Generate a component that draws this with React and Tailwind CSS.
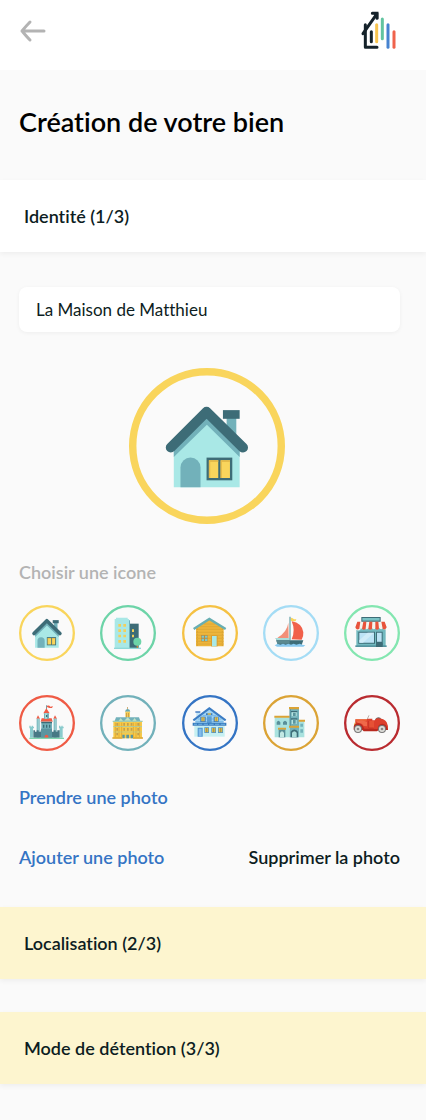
import React, { useState } from "react";

function BackArrow() {
  return (
    <svg viewBox="0 0 28 24" className="h-6 w-7" fill="none" stroke="#b3b3b3" strokeWidth="3" strokeLinecap="round" strokeLinejoin="round" aria-hidden="true">
      <path d="M25 12H3M11 3Q8 6 3 12Q8 18 11 21" />
    </svg>
  );
}

function Logo() {
  return (
    <svg viewBox="33 30 114 123" className="h-[41px] w-[38px]" fill="none" strokeLinecap="round" role="img" aria-label="Accueil">
      <g stroke="#15222a" strokeWidth="9">
        <path d="M49 74V142H84" strokeLinejoin="round" />
        <path d="M42 101L82 44" />
        <path d="M70 40L84 40L84 55" strokeLinejoin="miter" />
        <path d="M67 95V125" />
      </g>
      <path d="M71 39H88V58Z" fill="#15222a" />
      <g strokeWidth="9">
        <path d="M83 74V125" stroke="#f8c44f" />
        <path d="M100 57V116" stroke="#62c4a0" />
        <path d="M117 74V142" stroke="#4683d0" />
        <path d="M135 95V142" stroke="#f0634c" />
      </g>
    </svg>
  );
}

function Ring({ color, width = 7, children, className }) {
  return (
    <svg viewBox="0 0 168 168" className={className} aria-hidden="true">
      <circle cx="84" cy="84" r={84 - width / 2} fill="none" stroke={color} strokeWidth={width} />
      {children}
    </svg>
  );
}

function House() {
  return (
    <g transform="scale(0.36)">
      <path d="M292 145H321V230H292Z" fill="#72b1ba" />
      <path d="M281 126H331V152H281Z" fill="#3d6c77" />
      <path d="M134 234L233 138L331 234V357H134Z" fill="#a9e8e6" />
      <path d="M134 240V266L233 170L331 266V240L233 145Z" fill="#72b1ba" />
      <path d="M125 238L232 131L341 238" fill="none" stroke="#3d6c77" strokeWidth="30" strokeLinecap="round" strokeLinejoin="round" />
      <path d="M154 357V298A30 30 0 0 1 214 298V357Z" fill="#72b1ba" />
      <path d="M232 268H309V336H232Z" fill="#3d6c77" />
      <path d="M239 276H267V329H239ZM274 276H302V329H274Z" fill="#f9d55c" />
      <path d="M239 276H267V281H239ZM274 276H302V281H274ZM239 276H243V329H239ZM274 276H278V329H274Z" fill="#e6bb49" />
    </g>
  );
}

function Tower() {
  return (
    <g>
      <path d="M84 46H90V130H84Z" fill="#72b1ba" />
      <path d="M90 56H116V130H90Z" fill="#3d6c77" />
      <path d="M44 130V42H48V38H83V42H87V130Z" fill="#a9e8e6" />
      <path d="M42 128H123V132H42Z" fill="#8ed8d8" />
      <g fill="#f3cf5b">
        <path d="M55 57h8v8h-8zM70 57h8v8h-8zM55 73h8v8h-8zM70 73h8v8h-8zM55 89h8v8h-8zM70 89h8v8h-8zM55 105h8v8h-8zM70 105h8v8h-8z" />
        <path d="M96 73h6v8h-6zM96 89h6v8h-6z" />
      </g>
      <path d="M110 116h4v13h-4z" fill="#bd8b3c" />
      <circle cx="112" cy="110" r="12" fill="#6dd4a8" />
    </g>
  );
}

function Cabin() {
  return (
    <g>
      <path d="M42 70L82 43L125 70V124H42Z" fill="#edb53b" />
      <path d="M66 57H100M54 65H112M42 73H125M42 82H125M42 91H125M42 100H125M42 109H125M42 117H125" stroke="#d9a132" strokeWidth="2" />
      <path d="M46 70V124M121 70V124" stroke="#d9a132" strokeWidth="3" strokeDasharray="5 3" />
      <path d="M35 72L82 42L131 72" fill="none" stroke="#68aeb1" strokeWidth="7" />
      <path d="M57 90H77V109H57Z" fill="#bd8b3c" />
      <path d="M59 92h7v6h-7zM69 92h7v6h-7zM59 101h7v7h-7zM69 101h7v7h-7z" fill="#7dc9ca" />
      <path d="M87 91H107V124H87Z" fill="#d99e31" />
      <path d="M90 93H104V124H90Z" fill="#a9e8e6" />
    </g>
  );
}

function Sailboat() {
  return (
    <g>
      <path d="M83 38Q88 38 91 41Q95 44 100 42L98 48Q92 50 83 47Z" fill="#f9d55c" />
      <path d="M76 53Q72 82 43 98Q60 102 77 99Z" fill="#f28f78" />
      <path d="M86 49Q117 54 121 82Q122 94 116 104L86 103Q98 76 86 49Z" fill="#f1604a" />
      <path d="M79 35h4v71h-4z" fill="#74aab0" />
      <path d="M38 99H80V106H121L116 120H44Z" fill="#3d6c77" />
      <path d="M38 99H80V106H40Z" fill="#a9dcd9" />
      <path d="M40 106H80V116H43Z" fill="#5b8990" />
      <path d="M35 121L44 116L52 119L60 116L68 119L76 116L84 119L92 116L100 119L110 116L118 119L127 121L121 125H42Z" fill="#88c9ef" />
    </g>
  );
}

function Shop() {
  return (
    <g>
      <path d="M37 64H125V124H37Z" fill="#72b9bf" />
      <path d="M52 36H110V51H52Z" fill="#3d6c77" />
      <path d="M55 39H107V47H55Z" fill="#79c2c4" />
      <path d="M40 50H122L128 67A5 5 0 0 1 117 69A6 6 0 0 1 106 69A6 6 0 0 1 95 69A6 6 0 0 1 84 69A6 6 0 0 1 73 69A6 6 0 0 1 62 69A6 6 0 0 1 51 69A6 6 0 0 1 34 67Z" fill="#f4f3ee" />
      <path d="M40 50H49L46 71Q37 77 34 67ZM58 50H67L65 71Q59 77 54 71ZM76 50H85L84 71Q79 77 73 71ZM94 50H103L105 71Q99 77 94 71ZM112 50H122L128 67Q124 77 116 71Z" fill="#e8533c" />
      <path d="M43 80H93V116H43ZM96 80H116V122H96Z" fill="#3d6c77" />
      <path d="M46 83H90V113H46ZM99 83H113V110H99Z" fill="#bce3f5" />
      <path d="M46 106L71 83H90L57 113H46Z" fill="#d0ecf8" />
      <path d="M34 121H128V126H34Z" fill="#5595a0" />
      <path d="M96 113H116V126H96Z" fill="#3d6c77" />
    </g>
  );
}

function Castle() {
  return (
    <g>
      <path d="M82 31h2v12h-2z" fill="#3d6c77" />
      <path d="M84 32Q91 30 94 35L102 34L99 39H91L84 36Z" fill="#ef5b45" />
      <path d="M82 40L92 55H73ZM57 61L63 71H52ZM108 61L114 71H103ZM68 70H98L101 80H65Z" fill="#ef5b45" />
      <path d="M75 55H90V71H75ZM53 71H62V128H53ZM104 71H113V128H104Z" fill="#72b1ba" />
      <path d="M78 55H84V71H78ZM56 71H59V110H56ZM107 71H110V110H107Z" fill="#a9dcd9" />
      <path d="M67 80H99V128H67Z" fill="#72b1ba" />
      <path d="M67 81H99V85H67ZM72 89h4v9h-4zM81 89h4v9h-4zM90 89h4v9h-4zM81 60h4v6h-4z" fill="#3d6c77" />
      <path d="M31 92h4v3h3v-3h4v3h3v5h-3v28H33v-28h-2zM120 92h4v3h3v-3h4v3h3v5h-3v28h-9v-28h-2z" fill="#8acbcd" />
      <path d="M43 106h5v4h5v-4h6v4h6v-4h6v4h6v-4h9v4h6v-4h6v4h6v-4h6v4h5v-4h7v22H43z" fill="#487985" />
      <path d="M66 101H99V128H66Z" fill="#5b95a0" />
      <path d="M77 128V123Q83 115 88 123V128Z" fill="#ef5b45" />
      <path d="M31 128H135V132H31Z" fill="#80d6ae" />
    </g>
  );
}

function Palace() {
  return (
    <g>
      <path d="M82 36h2v9h-2z" fill="#bd8b3c" />
      <path d="M75 50Q76 42 83 42Q90 42 91 50Z" fill="#66a9b0" />
      <path d="M76 50H90V68H76Z" fill="#f4cd58" />
      <path d="M79 54h2v12h-2zM85 54h2v12h-2z" fill="#bd8b3c" />
      <path d="M48 67H117L121 78H44Z" fill="#72b1ba" />
      <path d="M56 78L62 69L69 78ZM73 77L83 67L93 77ZM97 78L104 69L110 78Z" fill="#bfe3c2" />
      <path d="M40 78H126V130H40Z" fill="#f7ca4a" />
      <path d="M46 83v43M57 83v43M65 83v43M100 83v43M108 83v43M119 83v43" stroke="#e3ad37" strokeWidth="3" />
      <path d="M49 84h5v8h-5zM49 99h5v8h-5zM49 114h5v7h-5zM70 84h5v8h-5zM70 99h5v8h-5zM81 84h5v8h-5zM81 99h5v8h-5zM92 84h5v8h-5zM92 99h5v8h-5zM112 84h5v8h-5zM112 99h5v8h-5zM112 114h5v7h-5z" fill="#c4a04e" />
      <path d="M38 77H128V81H38ZM40 94H126V96H40ZM40 110H126V112H40Z" fill="#a1cbb0" />
      <path d="M67 119h7v11h-7zM79 119h8v11h-8zM92 119h7v11h-7z" fill="#5b959d" />
      <path d="M37 127H67V131H37ZM99 127H129V131H99Z" fill="#dca735" />
    </g>
  );
}

function Chalet() {
  return (
    <g>
      <path d="M43 51H54V67H43Z" fill="#c2e4f6" />
      <path d="M40 49H55V53H40Z" fill="#3370bd" />
      <path d="M40 75L82 42L125 75V90H40Z" fill="#a3d5f4" />
      <path d="M62 62H103M48 72H118M40 80H125" stroke="#63a9dc" strokeWidth="2" />
      <path d="M37 93H128V125H37Z" fill="#c6f0f2" />
      <path d="M34 76L82 40L131 76" fill="none" stroke="#3c7dc4" strokeWidth="6" />
      <path d="M72 55H91V60H72ZM55 65H71V81H55ZM95 65H110V81H95Z" fill="#397ac0" />
      <path d="M58 67h10v12h-10zM98 67h10v12h-10zM77 55h10v4h-10z" fill="#e6c451" />
      <path d="M63 67v12M103 67v12" stroke="#8e8650" strokeWidth="2" />
      <path d="M75 64H89V84H75Z" fill="#5b9ed6" />
      <path d="M32 83H133V92H32Z" fill="#347abd" />
      <path d="M36 86h9v3h-9zM49 86h12v3H49zM65 86h13v3H65zM82 86h13v3H82zM99 86h13v3H99zM116 86h13v3h-13z" fill="#72b4e5" />
      <path d="M47 98H62V125H47ZM67 97H81V114H67ZM88 97H102V114H88ZM108 97H123V114H108Z" fill="#4b91cd" />
      <path d="M50 101H59V125H50Z" fill="#83bcea" />
      <path d="M69 99h10v13H69zM90 99h10v13H90zM110 99h11v13h-11z" fill="#dcba4c" />
      <path d="M74 99v13M95 99v13M116 99v13" stroke="#827e54" strokeWidth="2" />
    </g>
  );
}

function TownHouse() {
  return (
    <g>
      <path d="M35 67H80V127H35ZM108 78H124V127H108Z" fill="#a9e2df" />
      <path d="M80 42H108V127H80Z" fill="#72b1ba" />
      <path d="M34 62H80V68H34ZM78 36H108V43H78ZM107 74H126V80H107ZM45 98H69V104H45ZM78 92H108V98H78Z" fill="#dba335" />
      <path d="M41 89V82Q46 73 52 82V89ZM60 89V82Q66 73 72 82V89Z" fill="#598f99" />
      <path d="M84 48H103V52H84ZM84 70H103V74H84Z" fill="#3d6c77" />
      <path d="M86 52H101V64H86ZM86 74H101V87H86Z" fill="#b8e4e0" />
      <path d="M90 53h8v10h-8zM90 75h8v11h-8z" fill="#5b959d" />
      <path d="M47 104H67V127H47Z" fill="#598f99" />
      <path d="M51 127V113Q57 104 63 113V127Z" fill="#c2e8e3" />
      <path d="M83 127V110Q94 97 105 110V127Z" fill="#3d6c77" />
      <path d="M87 127V113Q94 104 101 113V127Z" fill="#a9dcd9" />
      <path d="M112 86h8v9h-8zM112 103h8v10h-8z" fill="#72b1ba" />
      <path d="M80 43h3v49h-3z" fill="#4d8793" />
    </g>
  );
}

function Car() {
  return (
    <g>
      <path d="M70 72L75 61" stroke="#9b8b80" strokeWidth="2" />
      <path d="M94 72Q101 63 110 69L111 75H94Z" fill="#62666a" />
      <path d="M34 73H68L72 71H85V76H92L98 70Q120 69 128 82Q134 94 132 105H32L33 98Z" fill="#dc3f2c" />
      <path d="M35 73H68V77H35Z" fill="#f0713c" />
      <path d="M33 82Q29 85 30 96L34 99V80Z" fill="#efb34b" />
      <path d="M29 99Q28 86 42 85Q53 84 61 101L101 102Q101 87 115 86Q128 87 132 105H104L99 109H59L53 103L29 104Z" fill="#b8291f" />
      <path d="M36 79L53 76L69 80V94L59 93Q54 83 42 84Z" fill="#ef6949" />
      <path d="M74 78H90V99H72Z" fill="#e65135" />
      <path d="M74 78V99H89" fill="none" stroke="#b8291f" strokeWidth="2" />
      <circle cx="42" cy="102" r="12" fill="#777676" />
      <circle cx="114" cy="102" r="12" fill="#777676" />
      <circle cx="42" cy="102" r="9" fill="#dededa" />
      <circle cx="114" cy="102" r="9" fill="#dededa" />
      <circle cx="42" cy="102" r="4" fill="#898887" />
      <circle cx="114" cy="102" r="4" fill="#898887" />
    </g>
  );
}

const ICONS = [
  { name: "Maison", color: "#f9d55c", Drawing: House },
  { name: "Immeuble", color: "#6dd4a8", Drawing: Tower },
  { name: "Chalet en bois", color: "#f5c143", Drawing: Cabin },
  { name: "Bateau", color: "#a4dcf5", Drawing: Sailboat },
  { name: "Commerce", color: "#83e6b0", Drawing: Shop },
  { name: "Château", color: "#ef5b45", Drawing: Castle },
  { name: "Palais", color: "#72b1ba", Drawing: Palace },
  { name: "Chalet", color: "#3474c4", Drawing: Chalet },
  { name: "Maison de ville", color: "#dba335", Drawing: TownHouse },
  { name: "Voiture", color: "#b92b30", Drawing: Car },
];

function StepBar({ children, tone }) {
  return (
    <h2>
      <button type="button" className={`block h-[72px] w-full px-6 text-left text-[18px] leading-6 font-semibold text-[#0d1d22] shadow-[0_2px_5px_rgba(0,0,0,0.05)] ${tone}`}>
        {children}
      </button>
    </h2>
  );
}

export default function App() {
  const [selected, setSelected] = useState(0);
  const [name, setName] = useState("La Maison de Matthieu");
  const Current = ICONS[selected];

  return (
    <div className="min-h-screen bg-[#fafafa] pb-9 font-['Lato','Open_Sans',sans-serif] text-[#0d1d22] [font-variant-ligatures:none]">
      <header className="flex items-center justify-between bg-white pt-2.5 pr-7 pb-[19px] pl-[19px]">
        <button type="button" aria-label="Retour"><BackArrow /></button>
        <Logo />
      </header>

      <main>
        <h1 className="px-[19px] pt-9 pb-[42px] text-[27px] leading-8 font-semibold text-black">Création de votre bien</h1>

        <StepBar tone="bg-white">Identité (1/3)</StepBar>

        <section className="pt-[35px] pr-[26px] pb-[38px] pl-[19px]">
          <input
            type="text"
            aria-label="Nom du bien"
            value={name}
            onChange={(e) => setName(e.target.value)}
            className="block h-[45px] w-full rounded-lg bg-white px-[17px] text-[17px] leading-6 shadow-[0_1px_4px_rgba(0,0,0,0.05)] outline-none"
          />

          <div className="flex justify-center pt-9 pr-1.5 pb-9">
            <Ring color={Current.color} width={8} className="size-[156px]"><Current.Drawing /></Ring>
          </div>

          <h3 className="text-[18px] leading-6 font-semibold text-[#b3b3b3]">Choisir une icone</h3>

          <div className="grid grid-cols-[repeat(5,56px)] justify-between gap-y-[34px] pt-[21px]">
            {ICONS.map(({ name: label, color, Drawing }, i) => (
              <button key={label} type="button" aria-label={label} aria-pressed={i === selected} onClick={() => setSelected(i)}>
                <Ring color={color} className="size-14"><Drawing /></Ring>
              </button>
            ))}
          </div>

          <div className="flex flex-wrap justify-between gap-y-9 pt-[34px] text-[18px] leading-6 font-semibold">
            <div className="w-full">
              <button type="button" className="text-[#3474c4]">Prendre une photo</button>
            </div>
            <button type="button" className="text-[#3474c4]">Ajouter une photo</button>
            <button type="button">Supprimer la photo</button>
          </div>
        </section>

        <div className="flex flex-col gap-[33px]">
          <StepBar tone="bg-[#fdf5cf]">Localisation (2/3)</StepBar>
          <StepBar tone="bg-[#fdf5cf]">Mode de détention (3/3)</StepBar>
        </div>
      </main>
    </div>
  );
}
